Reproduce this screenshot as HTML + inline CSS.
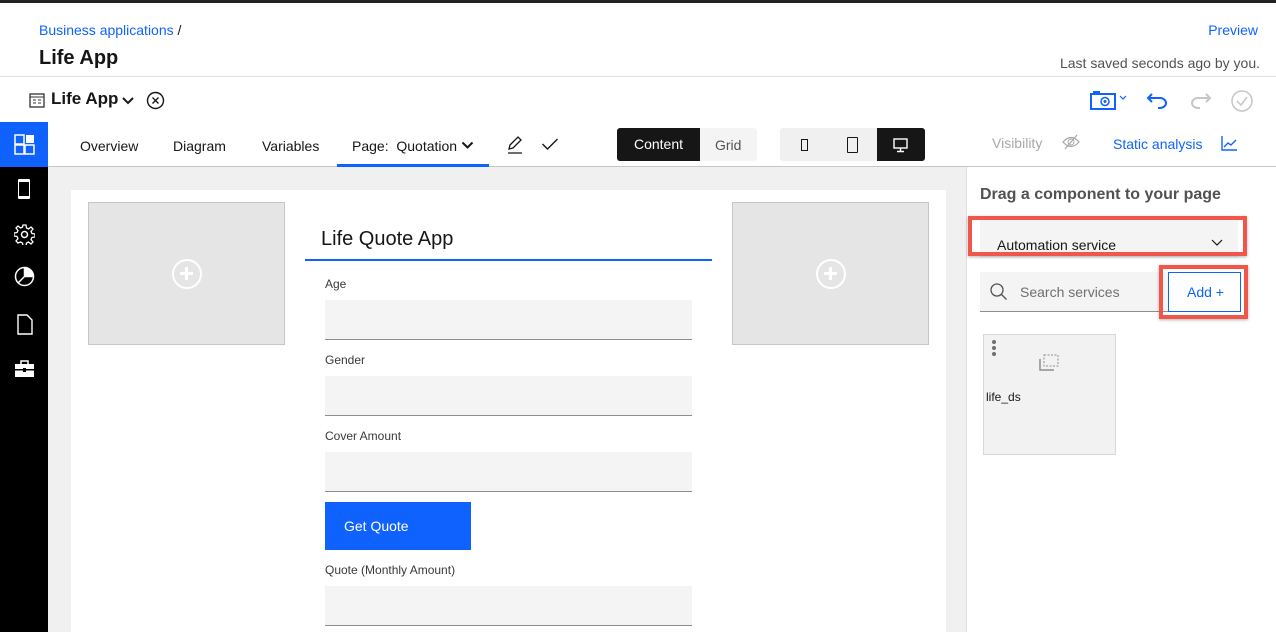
<!DOCTYPE html>
<html><head><style>
*{margin:0;padding:0;box-sizing:border-box}
body{width:1276px;height:632px;overflow:hidden;font-family:"Liberation Sans",sans-serif;background:#fff;position:relative;color:#161616}
.a{position:absolute}
.lbl{font-size:12px;color:#393939}
.inp{background:#f4f4f4;border-bottom:1px solid #8d8d8d;width:367px;height:40px;left:325px}
.ph{background:#e5e5e5;border:1px solid #c6c6c6;width:197px;height:143px}
.plus{width:30px;height:30px;border:2.5px solid #fff;border-radius:50%;left:83px;top:56px}
.plus:before{content:"";position:absolute;left:6px;top:11px;width:13px;height:3px;background:#fff}
.plus:after{content:"";position:absolute;left:11px;top:6px;width:3px;height:13px;background:#fff}
.tab{font-size:14px;top:138px}
</style></head><body>
<div class="a" style="left:0;top:0;width:1276px;height:3px;background:#222"></div>
<div class="a" style="left:39px;top:22px;font-size:14px;color:#0f62fe">Business applications <span style="color:#161616">/</span></div>
<div class="a" style="left:39px;top:47px;font-size:20px;font-weight:bold">Life App</div>
<div class="a" style="right:18px;top:22px;font-size:14px;color:#0f62fe">Preview</div>
<div class="a" style="right:16px;top:55px;font-size:14px;color:#525252">Last saved seconds ago by you.</div>
<div class="a" style="left:0;top:76px;width:1276px;height:1px;background:#e0e0e0"></div>
<!-- toolbar -->
<svg class="a" style="left:29px;top:93px" width="16" height="15"><rect x="1" y="1" width="14" height="13" fill="none" stroke="#333" stroke-width="1.3"/><line x1="1" y1="4" x2="15" y2="4" stroke="#333"/><path d="M4 7h3M9 7h3M4 10h3M9 10h3" stroke="#333"/></svg>
<div class="a" style="left:51px;top:89px;font-size:17px;font-weight:bold">Life App</div>
<svg class="a" style="left:121px;top:96px" width="14" height="9"><path d="M2 2l5 5 5-5" fill="none" stroke="#161616" stroke-width="2"/></svg>
<svg class="a" style="left:146px;top:91px" width="19" height="19"><circle cx="9.5" cy="9.5" r="8" fill="none" stroke="#161616" stroke-width="1.4"/><path d="M6.5 6.5l6 6M12.5 6.5l-6 6" stroke="#161616" stroke-width="1.4"/></svg>
<svg class="a" style="left:1090px;top:91px" width="40" height="20"><rect x="1" y="3" width="24" height="15" fill="none" stroke="#0f62fe" stroke-width="2"/><rect x="3" y="0" width="7" height="3" fill="#0f62fe"/><circle cx="15" cy="10.5" r="4" fill="none" stroke="#0f62fe" stroke-width="1.5"/><circle cx="15" cy="10.5" r="1.5" fill="#0f62fe"/><path d="M30 5l3 3 3-3" fill="none" stroke="#0f62fe" stroke-width="1.2"/></svg>
<svg class="a" style="left:1146px;top:90px" width="24" height="20"><path d="M6 4L2 8l4 4M2 8h12a6 5 0 0 1 0 10h-2" fill="none" stroke="#0f62fe" stroke-width="2"/></svg>
<svg class="a" style="left:1188px;top:90px" width="24" height="20"><path d="M18 4l4 4-4 4M22 8H10a6 5 0 0 0 0 10h2" fill="none" stroke="#c6c6c6" stroke-width="2"/></svg>
<svg class="a" style="left:1230px;top:89px" width="24" height="24"><circle cx="12" cy="12" r="10" fill="none" stroke="#c6c6c6" stroke-width="1.5"/><path d="M7 12l4 4 6-8" fill="none" stroke="#c6c6c6" stroke-width="1.5"/></svg>
<!-- tab row -->
<div class="a" style="left:0;top:122px;width:1276px;height:45px;border-bottom:1px solid #c6c6c6"></div>
<div class="a" style="left:0;top:122px;width:48px;height:45px;background:#0f62fe"></div>
<svg class="a" style="left:14px;top:134px" width="21" height="21"><path d="M1 1h9v9H1zM1 11h9v9H1zM11 11h9v9h-9z" fill="none" stroke="#fff" stroke-width="1.5"/><rect x="12" y="1" width="8" height="8" fill="#fff"/></svg>
<div class="a tab" style="left:80px">Overview</div>
<div class="a tab" style="left:173px">Diagram</div>
<div class="a tab" style="left:262px">Variables</div>
<div class="a tab" style="left:352px">Page:&nbsp; Quotation</div>
<svg class="a" style="left:461px;top:141px" width="13" height="9"><path d="M1.5 1.5l5 5 5-5" fill="none" stroke="#161616" stroke-width="2"/></svg>
<div class="a" style="left:337px;top:164px;width:152px;height:3px;background:#0f62fe"></div>
<svg class="a" style="left:505px;top:135px" width="20" height="20"><path d="M4 14l1-4 8-8 3 3-8 8zM3 18h14" fill="none" stroke="#161616" stroke-width="1.3"/></svg>
<svg class="a" style="left:541px;top:137px" width="18" height="14"><path d="M1.5 7l5 5 10-10" fill="none" stroke="#161616" stroke-width="1.4"/></svg>
<div class="a" style="left:617px;top:128px;width:140px;height:33px;background:#f4f4f4;border-radius:3px"></div>
<div class="a" style="left:617px;top:128px;width:83px;height:33px;background:#161616;border-radius:3px 0 0 3px;color:#fff;font-size:14px;text-align:center;line-height:33px">Content</div>
<div class="a" style="left:715px;top:137px;font-size:14px;color:#525252">Grid</div>
<div class="a" style="left:780px;top:128px;width:145px;height:33px;background:#f0f0f0;border-radius:3px"></div>
<div class="a" style="left:877px;top:128px;width:48px;height:33px;background:#161616;border-radius:0 3px 3px 0"></div>
<div class="a" style="left:801px;top:139px;width:7px;height:12px;border:1.5px solid #161616"></div>
<div class="a" style="left:777px;top:138px;width:1px;height:14px"></div>
<div class="a" style="left:847px;top:137px;width:11px;height:16px;border:1.5px solid #161616;border-radius:1px"></div>
<svg class="a" style="left:893px;top:138px" width="16" height="15"><rect x="1" y="1" width="13" height="9" fill="none" stroke="#fff" stroke-width="1.4"/><path d="M7.5 10v3M4 13.5h7" stroke="#fff" stroke-width="1.4"/></svg>
<div class="a" style="left:992px;top:135px;font-size:14px;color:#a8a8a8">Visibility</div>
<svg class="a" style="left:1062px;top:134px" width="18" height="16"><path d="M1 8q8-9 16 0q-8 9-16 0z" fill="none" stroke="#a8a8a8" stroke-width="1.2"/><circle cx="9" cy="8" r="3" fill="none" stroke="#a8a8a8"/><path d="M3 15L15 1" stroke="#a8a8a8" stroke-width="1.2"/></svg>
<div class="a" style="left:1113px;top:136px;font-size:14px;color:#0f62fe">Static analysis</div>
<svg class="a" style="left:1221px;top:135px" width="17" height="16"><path d="M1 1v14h15M3 12l4-4 3 2 5-5" fill="none" stroke="#0f62fe" stroke-width="1.4"/></svg>
<!-- sidebar -->
<div class="a" style="left:0;top:167px;width:48px;height:465px;background:#000"></div>
<div class="a" style="left:18px;top:179px;width:12px;height:20px;border:1.5px solid #fff;border-radius:1px;border-top-width:3px;border-bottom-width:3px"></div>
<svg class="a" style="left:14px;top:224px" width="21" height="21"><circle cx="10.5" cy="10.5" r="3" fill="none" stroke="#fff" stroke-width="1.5"/><path d="M9 1h3l.5 3 2 1 2.5-2 2 2-2 2.5 1 2 3 .5v3l-3 .5-1 2 2 2.5-2 2-2.5-2-2 1-.5 3H9l-.5-3-2-1L4 19l-2-2 2-2.5-1-2-3-.5V9l3-.5 1-2L2 4l2-2 2.5 2 2-1z" fill="none" stroke="#fff" stroke-width="1.3"/></svg>
<svg class="a" style="left:14px;top:266px" width="21" height="21"><circle cx="10.5" cy="10.5" r="9" fill="none" stroke="#fff" stroke-width="1.5"/><path d="M10.5 1.5v9h9M10.5 10.5L4 17" fill="none" stroke="#fff" stroke-width="1.5"/><path d="M10.5 1.5a9 9 0 0 1 9 9h-9z" fill="#fff"/></svg>
<svg class="a" style="left:17px;top:314px" width="16" height="21"><path d="M1 1h9l5 5v14H1z" fill="none" stroke="#fff" stroke-width="1.4"/></svg>
<svg class="a" style="left:14px;top:359px" width="21" height="19"><rect x="1" y="5" width="19" height="13" fill="#fff"/><path d="M7 5V2h7v3" fill="none" stroke="#fff" stroke-width="1.5"/><rect x="1" y="10" width="19" height="1.5" fill="#000"/><rect x="9" y="9" width="3" height="4" fill="#000"/></svg>
<!-- canvas -->
<div class="a" style="left:48px;top:167px;width:918px;height:465px;background:#f0f0f0"></div>
<div class="a" style="left:71px;top:190px;width:875px;height:442px;background:#fff"></div>
<div class="a ph" style="left:88px;top:202px"><div class="a plus"></div></div>
<div class="a ph" style="left:732px;top:202px"><div class="a plus"></div></div>
<div class="a" style="left:321px;top:228px;font-size:20px">Life Quote App</div>
<div class="a" style="left:305px;top:259px;width:407px;height:2px;background:#0f62fe"></div>
<div class="a lbl" style="left:325px;top:277px">Age</div>
<div class="a inp" style="top:300px"></div>
<div class="a lbl" style="left:325px;top:353px">Gender</div>
<div class="a inp" style="top:376px"></div>
<div class="a lbl" style="left:325px;top:429px">Cover Amount</div>
<div class="a inp" style="top:452px"></div>
<div class="a" style="left:325px;top:502px;width:146px;height:48px;background:#0f62fe;color:#fff;font-size:14px;padding:16px 0 0 19px">Get Quote</div>
<div class="a lbl" style="left:325px;top:563px">Quote (Monthly Amount)</div>
<div class="a inp" style="top:586px"></div>
<!-- right panel -->
<div class="a" style="left:966px;top:167px;width:1px;height:465px;background:#e0e0e0"></div>
<div class="a" style="left:980px;top:186px;font-size:16px;font-weight:bold;color:#525252">Drag a component to your page</div>
<div class="a" style="left:980px;top:218px;width:258px;height:40px;background:#f4f4f4"></div>
<div class="a" style="left:968px;top:216px;width:279px;height:40px;border:4px solid #f0574a;box-shadow:0 1px 3px rgba(0,0,0,.3)"></div>
<div class="a" style="left:997px;top:237px;font-size:14px">Automation service</div>
<svg class="a" style="left:1211px;top:239px" width="12" height="8"><path d="M1 1l5 5 5-5" fill="none" stroke="#161616" stroke-width="1.2"/></svg>
<div class="a" style="left:980px;top:272px;width:260px;height:40px;background:#f4f4f4;border-bottom:1px solid #8d8d8d"></div>
<svg class="a" style="left:990px;top:283px" width="18" height="18"><circle cx="7" cy="7" r="6" fill="none" stroke="#525252" stroke-width="1.3"/><path d="M11.5 11.5l5 5" stroke="#525252" stroke-width="1.3"/></svg>
<div class="a" style="left:1020px;top:284px;font-size:14px;color:#6f6f6f">Search services</div>
<div class="a" style="left:1168px;top:272px;width:73px;height:40px;background:#fff;border:1px solid #0f62fe"></div>
<div class="a" style="left:1159px;top:265px;width:89px;height:54px;border:4px solid #f0574a;box-shadow:0 1px 3px rgba(0,0,0,.3)"></div>
<div class="a" style="left:1187px;top:284px;font-size:14px;color:#0f62fe">Add +</div>
<div class="a" style="left:983px;top:334px;width:133px;height:121px;background:#f2f2f2;border:1px solid #d8d8d8"></div>
<svg class="a" style="left:990px;top:339px" width="8" height="20"><circle cx="4" cy="3" r="2" fill="#6f6f6f"/><circle cx="4" cy="9" r="2" fill="#6f6f6f"/><circle cx="4" cy="15" r="2" fill="#6f6f6f"/></svg>
<svg class="a" style="left:1038px;top:352px" width="24" height="20"><path d="M6 3h14v11H6z" fill="none" stroke="#8d8d8d" stroke-dasharray="2 1.5"/><path d="M2 7v11h14" fill="none" stroke="#8d8d8d" stroke-width="1.5"/></svg>
<div class="a" style="left:986px;top:390px;font-size:12px">life_ds</div>
</body></html>
